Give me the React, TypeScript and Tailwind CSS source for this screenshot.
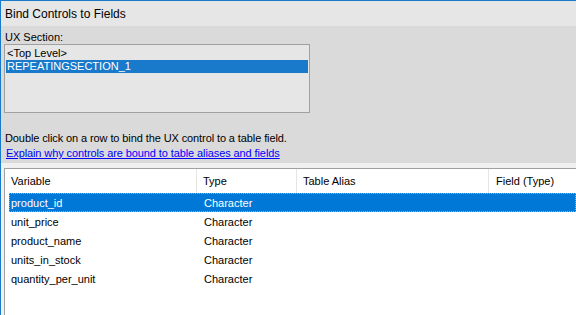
const rows = ["product_id", "unit_price", "product_name", "units_in_stock", "quantity_per_unit"];

export default function App() {
  return (
    <div
      className="w-[576px] h-[315px] overflow-hidden border-l border-t border-[#1979ca] bg-[#dadada] text-black text-[11px] leading-none flex flex-col"
      style={{ fontFamily: '"Liberation Sans", Arial, sans-serif' }}
    >
      {/* title */}
      <div className="h-[25px] shrink-0 bg-[#e6e6e6] flex items-center pl-[4px] text-[12px]">
        Bind Controls to Fields
      </div>

      {/* ux section */}
      <div className="h-[137px] shrink-0 flex flex-col pl-[3px]">
        <div className="h-[18px] flex items-end pl-[1px] pb-[1px]">UX Section:</div>
        <div className="w-[306px] h-[69px] border border-[#a0a0a0] bg-[#e6e6e6] px-[1px] pt-[1px]">
          <div className="h-[14px] flex items-center pl-[1px]">&lt;Top Level&gt;</div>
          <div className="h-[13px] flex items-center pl-[1px] bg-[#1979ca] text-white">REPEATINGSECTION_1</div>
        </div>
        <div className="mt-[18px] h-[15px] flex items-center pl-[1px] tracking-[-0.1px]">
          Double click on a row to bind the UX control to a table field.
        </div>
        <div className="h-[15px] flex items-center pl-[2px] text-[#0000ff] underline tracking-[-0.1px]">
          Explain why controls are bound to table aliases and fields
        </div>
      </div>

      {/* table */}
      <div className="flex-1 bg-[#f0f0f0] pl-[3px] pt-[5px]">
        <div className="h-full border-l border-t border-[#a0a0a0] bg-white">
          <div className="h-[24px] flex items-center">
            <div className="w-[192px] h-full flex items-center pl-[6px] border-r border-[#e5e5e5]">Variable</div>
            <div className="w-[100px] h-full flex items-center pl-[6px] border-r border-[#e5e5e5]">Type</div>
            <div className="w-[192px] h-full flex items-center pl-[6px] border-r border-[#e5e5e5]">Table Alias</div>
            <div className="flex-1 h-full flex items-center pl-[7px]">Field (Type)</div>
          </div>
          <div className="pl-[4px]">
            {rows.map((r, i) => (
              <div
                key={r}
                className={
                  i === 0
                    ? "h-[19px] flex items-center pt-[1px] bg-[#0078d7] text-white border border-dotted border-[#e8a060]"
                    : "h-[19px] flex items-center pt-[1px] border border-transparent"
                }
              >
                <div className="w-[186px] pl-[1px]">{r}</div>
                <div className="pl-[8px]">Character</div>
              </div>
            ))}
          </div>
        </div>
      </div>
    </div>
  );
}
